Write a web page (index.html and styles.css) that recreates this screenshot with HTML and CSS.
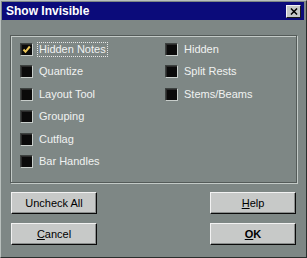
FILE: index.html
```html
<!DOCTYPE html>
<html lang="en">
<head>
  <meta charset="UTF-8" />
  <title>Show Invisible</title>
  <link rel="stylesheet" href="styles.css">
</head>
<body>
  <div class="window">
    <div class="titlebar">
      <span class="title">Show Invisible</span>
      <button class="close">
        <svg viewBox="0 0 9 8"><path d="M1 0.5 L8 7.5 M8 0.5 L1 7.5" /></svg>
      </button>
    </div>

    <div class="group">
      <div class="options">
        <label class="option checked"><span class="box"><svg viewBox="0 0 9 9"><path d="M1.5 4.5 L3.5 6.8 L7.8 1.5" /></svg></span><span class="text focus">Hidden Notes</span></label>
        <label class="option"><span class="box"></span><span class="text">Hidden</span></label>
        <label class="option"><span class="box"></span><span class="text">Quantize</span></label>
        <label class="option"><span class="box"></span><span class="text">Split Rests</span></label>
        <label class="option"><span class="box"></span><span class="text">Layout Tool</span></label>
        <label class="option"><span class="box"></span><span class="text">Stems/Beams</span></label>
        <label class="option"><span class="box"></span><span class="text">Grouping</span></label>
        <span></span>
        <label class="option"><span class="box"></span><span class="text">Cutflag</span></label>
        <span></span>
        <label class="option"><span class="box"></span><span class="text">Bar Handles</span></label>
      </div>
    </div>

    <div class="buttons">
      <button class="btn">Uncheck All</button>
      <button class="btn"><u>H</u>elp</button>
      <button class="btn"><u>C</u>ancel</button>
      <button class="btn default"><u>O</u>K</button>
    </div>
  </div>
</body>
</html>
```

FILE: styles.css
```css
body {
  margin: 0;
  font-family: 'Liberation Sans', Arial, sans-serif;
}

.window {
  width: 307px;
  height: 258px;
  box-sizing: border-box;
  padding: 2px;
  background-color: #7e8785;
  border-top: 1px solid #b9c0bd;
  border-left: 1px solid #b9c0bd;
  border-right: 1px solid #2a2e2d;
  border-bottom: 1px solid #2a2e2d;
}

.titlebar {
  height: 18px;
  margin-top: -1px;
  margin-left: -1px;
  background-color: #0b0b7a;
  display: flex;
  align-items: center;
  justify-content: space-between;
  padding: 0 3px 0 4px;
}

.title {
  color: white;
  font-weight: bold;
  font-size: 12px;
}

.close {
  width: 15px;
  height: 13px;
  padding: 0;
  background-color: #c6c9c8;
  border: 1px solid;
  border-color: #f4f4f4 #1c1c1c #1c1c1c #f4f4f4;
  display: flex;
  align-items: center;
  justify-content: center;
}

.close svg {
  width: 8px;
  height: 7px;
  stroke: black;
  stroke-width: 1.6;
}

.group {
  margin: 15px 7px 0 7px;
  height: 148px;
  box-sizing: border-box;
  border: 1px solid #545b59;
  box-shadow: 1px 1px 0 #c3cac7, inset 1px 1px 0 #c3cac7;
  padding: 7px 0 0 9px;
}

.options {
  display: grid;
  grid-template-columns: 145px 1fr;
  grid-auto-rows: 22.4px;
}

.option {
  display: flex;
  align-items: flex-start;
  gap: 4px;
  color: #f0f2f1;
  font-size: 11px;
}

.box {
  width: 13px;
  height: 13px;
  box-sizing: border-box;
  background-color: #0a0a0a;
  border-top: 1px solid #3d4240;
  border-left: 1px solid #3d4240;
  border-right: 1px solid #c8cecb;
  border-bottom: 1px solid #c8cecb;
  box-shadow: inset 1px 1px 0 #2a2a2a;
  display: flex;
  align-items: center;
  justify-content: center;
}

.box svg {
  width: 9px;
  height: 9px;
  fill: none;
  stroke: #e8c458;
  stroke-width: 2;
}

.text {
  padding: 0 1px;
  line-height: 13px;
  border: 1px solid transparent;
  margin-top: -1px;
}

.text.focus {
  border: 1px dotted #e6e6e6;
}

.buttons {
  display: grid;
  grid-template-columns: 86px 86px;
  justify-content: space-between;
  row-gap: 9px;
  margin: 9px 8px 0 8px;
}

.btn {
  height: 22px;
  padding: 0;
  font-family: 'Liberation Sans', Arial, sans-serif;
  font-size: 11px;
  color: black;
  background-color: #c7c9c8;
  border: 1px solid;
  border-color: #f2f2f2 #0a0a0a #0a0a0a #f2f2f2;
  box-shadow: inset -1px -1px 0 #8a8d8c;
}

.btn.default {
  font-weight: bold;
}
```
